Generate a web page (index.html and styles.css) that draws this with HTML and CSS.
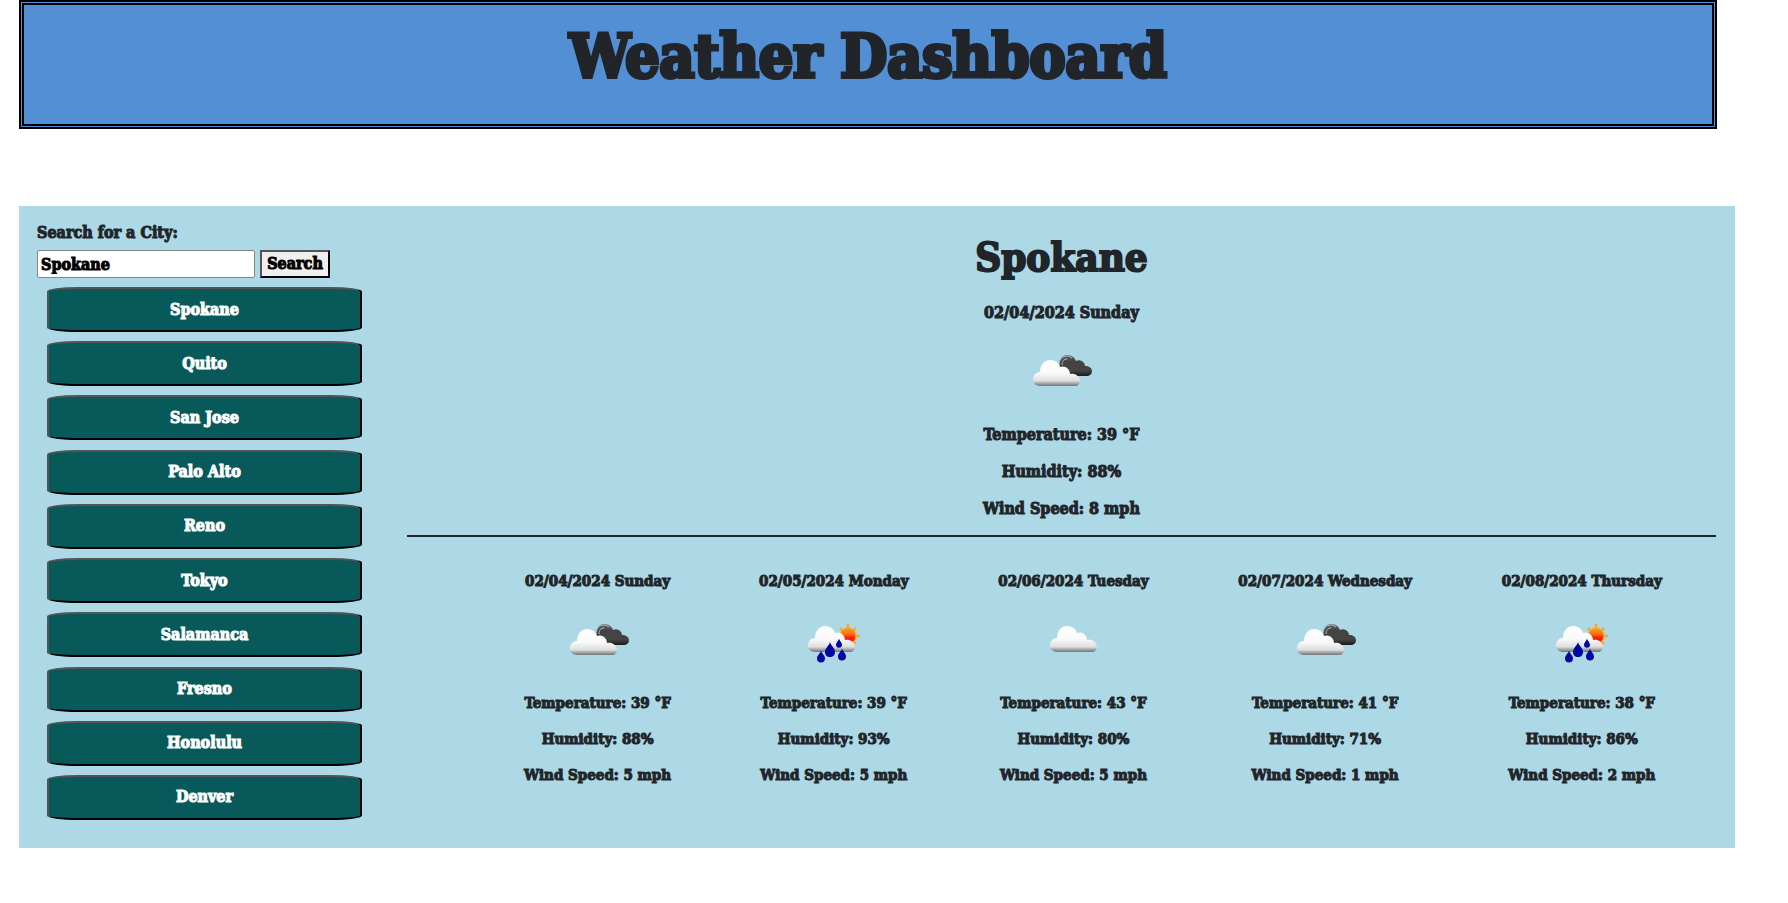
FILE: index.html
```html
<!DOCTYPE html>
<html lang="en">
<head>
<meta charset="utf-8">
<meta name="viewport" content="width=device-width, initial-scale=1">
<title>Weather Dashboard</title>
<link rel="stylesheet" href="styles.css">
</head>
<body>
<svg class="sprite" aria-hidden="true">
  <defs>
    <linearGradient id="white-fill" x1="0" y1="0" x2="0" y2="1">
      <stop offset="0" stop-color="#ffffff"/>
      <stop offset=".5" stop-color="#fafafa"/>
      <stop offset=".8" stop-color="#dedede"/>
      <stop offset=".9" stop-color="#a4a8aa"/>
      <stop offset="1" stop-color="#707678"/>
    </linearGradient>
    <linearGradient id="dark-fill" x1="0" y1="0" x2="0" y2="1">
      <stop offset="0" stop-color="#6a6a6a"/>
      <stop offset=".3" stop-color="#444444"/>
      <stop offset=".75" stop-color="#444444"/>
      <stop offset="1" stop-color="#181818"/>
    </linearGradient>
    <linearGradient id="sun-fill" x1="0" y1="0" x2="0" y2="1">
      <stop offset="0" stop-color="#f9a11b"/>
      <stop offset=".4" stop-color="#fb6a10"/>
      <stop offset=".6" stop-color="#fb1d05"/>
      <stop offset="1" stop-color="#f51000"/>
    </linearGradient>
    <path id="cloud" fill="url(#white-fill)" d="M11 33C6 33 3 29 4 25C5 21 8 19 11 19C11 12 15 7 21 7C26 7 30 10 31 14C36 12 41 16 41 21C46 20 50 23 51 27C51 31 49 33 46 33Z"/>
    <path id="drop" fill="#0505a0" d="M0-7C1-3 5-1 5 3C5 6 3 8 0 8S-5 6-5 3C-5-1-1-3 0-7Z"/>
  </defs>
  <symbol id="broken-clouds" viewBox="0 0 64 46">
    <path fill="url(#dark-fill)" d="M30 16C29 7 33 2 38 2C43 2 46 5 47 8C51 6 56 9 56 13C60 13 63 15 63 18C63 22 60 23 57 23H41Z"/>
    <path fill="none" stroke="#b4bec2" stroke-width="1" d="M30 13C30 7 33 3 38 3C40 3 42 4 43 5M33 12C33 8 35 6 38 6"/>
    <use href="#cloud"/>
  </symbol>
  <symbol id="rain" viewBox="0 0 64 46">
    <path stroke="#f7a92c" stroke-width="2.4" d="M46 2V26M34 14H58M38 6L54 22M54 6L38 22"/>
    <circle cx="46" cy="14" r="8" fill="url(#sun-fill)" stroke="#f7a92c" stroke-width="1.4"/>
    <use href="#cloud" x="2" y="-3"/>
    <use href="#drop" transform="translate(28 27)"/>
    <use href="#drop" transform="translate(37 21) scale(.6)"/>
    <use href="#drop" transform="translate(19 34) scale(.8)"/>
    <use href="#drop" transform="translate(40 32) scale(.8)"/>
  </symbol>
  <symbol id="scattered-clouds" viewBox="0 0 64 46">
    <use href="#cloud" x="5" y="-3"/>
  </symbol>
</svg>

<header class="banner">
  <h1>Weather Dashboard</h1>
</header>

<main class="dashboard">
  <aside class="sidebar">
    <form class="search">
      <label for="city">Search for a City:</label>
      <div class="search-row">
        <input id="city" type="text" value="Spokane">
        <button type="button">Search</button>
      </div>
    </form>
    <nav class="cities" aria-label="Cities">
      <button type="button">Spokane</button>
      <button type="button">Quito</button>
      <button type="button">San Jose</button>
      <button type="button">Palo Alto</button>
      <button type="button">Reno</button>
      <button type="button">Tokyo</button>
      <button type="button">Salamanca</button>
      <button type="button">Fresno</button>
      <button type="button">Honolulu</button>
      <button type="button">Denver</button>
    </nav>
  </aside>

  <div class="weather">
    <section class="current">
      <h2>Spokane</h2>
      <p>02/04/2024 Sunday</p>
      <svg class="icon" role="img" aria-label="Broken clouds"><use href="#broken-clouds"/></svg>
      <p>Temperature: 39 °F</p>
      <p>Humidity: 88%</p>
      <p>Wind Speed: 8 mph</p>
    </section>
    <section class="forecast">
      <article>
        <p>02/04/2024 Sunday</p>
        <svg class="icon" role="img" aria-label="Broken clouds"><use href="#broken-clouds"/></svg>
        <p>Temperature: 39 °F</p>
        <p>Humidity: 88%</p>
        <p>Wind Speed: 5 mph</p>
      </article>
      <article>
        <p>02/05/2024 Monday</p>
        <svg class="icon" role="img" aria-label="Rain"><use href="#rain"/></svg>
        <p>Temperature: 39 °F</p>
        <p>Humidity: 93%</p>
        <p>Wind Speed: 5 mph</p>
      </article>
      <article>
        <p>02/06/2024 Tuesday</p>
        <svg class="icon" role="img" aria-label="Scattered clouds"><use href="#scattered-clouds"/></svg>
        <p>Temperature: 43 °F</p>
        <p>Humidity: 80%</p>
        <p>Wind Speed: 5 mph</p>
      </article>
      <article>
        <p>02/07/2024 Wednesday</p>
        <svg class="icon" role="img" aria-label="Broken clouds"><use href="#broken-clouds"/></svg>
        <p>Temperature: 41 °F</p>
        <p>Humidity: 71%</p>
        <p>Wind Speed: 1 mph</p>
      </article>
      <article>
        <p>02/08/2024 Thursday</p>
        <svg class="icon" role="img" aria-label="Rain"><use href="#rain"/></svg>
        <p>Temperature: 38 °F</p>
        <p>Humidity: 86%</p>
        <p>Wind Speed: 2 mph</p>
      </article>
    </section>
  </div>
</main>
</body>
</html>
```
FILE: styles.css
```css
* {
  box-sizing: border-box;
}

body {
  margin: 0 0 0 19px;
  background: #fff;
  color: #212529;
  font: bold 16px/24px "DejaVu Serif Condensed", "DejaVu Serif", serif;
  -webkit-text-stroke: 1px;
}

h1,
h2,
p {
  margin: 0;
}

.sprite {
  position: absolute;
  width: 0;
  height: 0;
}

.banner {
  width: 96%;
  padding: 16px 0 33px;
  border: 5px double #000;
  background: #528fd5;
  text-align: center;
}

.banner h1 {
  font-size: 60px;
  line-height: 70px;
  -webkit-text-stroke: 4px;
}

.dashboard {
  display: flex;
  gap: 45px;
  width: 97%;
  margin-top: 77px;
  padding: 15px 19px 28px 18px;
  background: #add8e6;
}

.sidebar {
  display: flex;
  flex-direction: column;
  flex: none;
  width: 325px;
}

.search label {
  display: block;
}

.search-row {
  display: flex;
  gap: 5px;
  margin-top: 5px;
}

.search input,
.search button {
  height: 28px;
  font: inherit;
  color: #000;
}

.search input {
  width: 218px;
  padding: 0 3px;
  border: 1px solid #858585;
  border-radius: 2px;
  background: #fff;
}

.search button {
  width: 70px;
  padding: 0;
  border: 2px outset #000;
  background: #efefef;
  line-height: 20px;
}

.cities {
  display: flex;
  flex: 1;
  flex-direction: column;
  justify-content: space-between;
  margin: 9px 0 0 10px;
}

.cities button {
  height: 45px;
  border: 2px outset #000;
  border-radius: 10%;
  background: #085a5a;
  color: #fff;
  font: inherit;
}

.weather {
  flex: 1;
  min-width: 0;
}

.current,
.forecast article {
  display: flex;
  flex-direction: column;
  align-items: center;
  gap: 13px;
}

.current {
  padding: 12px 0 14px;
  border-bottom: 2px solid #212529;
}

.current h2 {
  margin-bottom: 7px;
  font-size: 40px;
  line-height: 48px;
  -webkit-text-stroke: 2px;
}

.icon {
  width: 64px;
  height: 46px;
  margin: 15px 0 11px;
}

.forecast {
  display: grid;
  grid-template-columns: 233fr 239fr 240fr 263fr 250fr;
  padding: 32px 9px 33px 74px;
  font-size: 15px;
}

.forecast article {
  gap: 12px;
}

.forecast .icon {
  margin: 17px 0 11px;
}
```
